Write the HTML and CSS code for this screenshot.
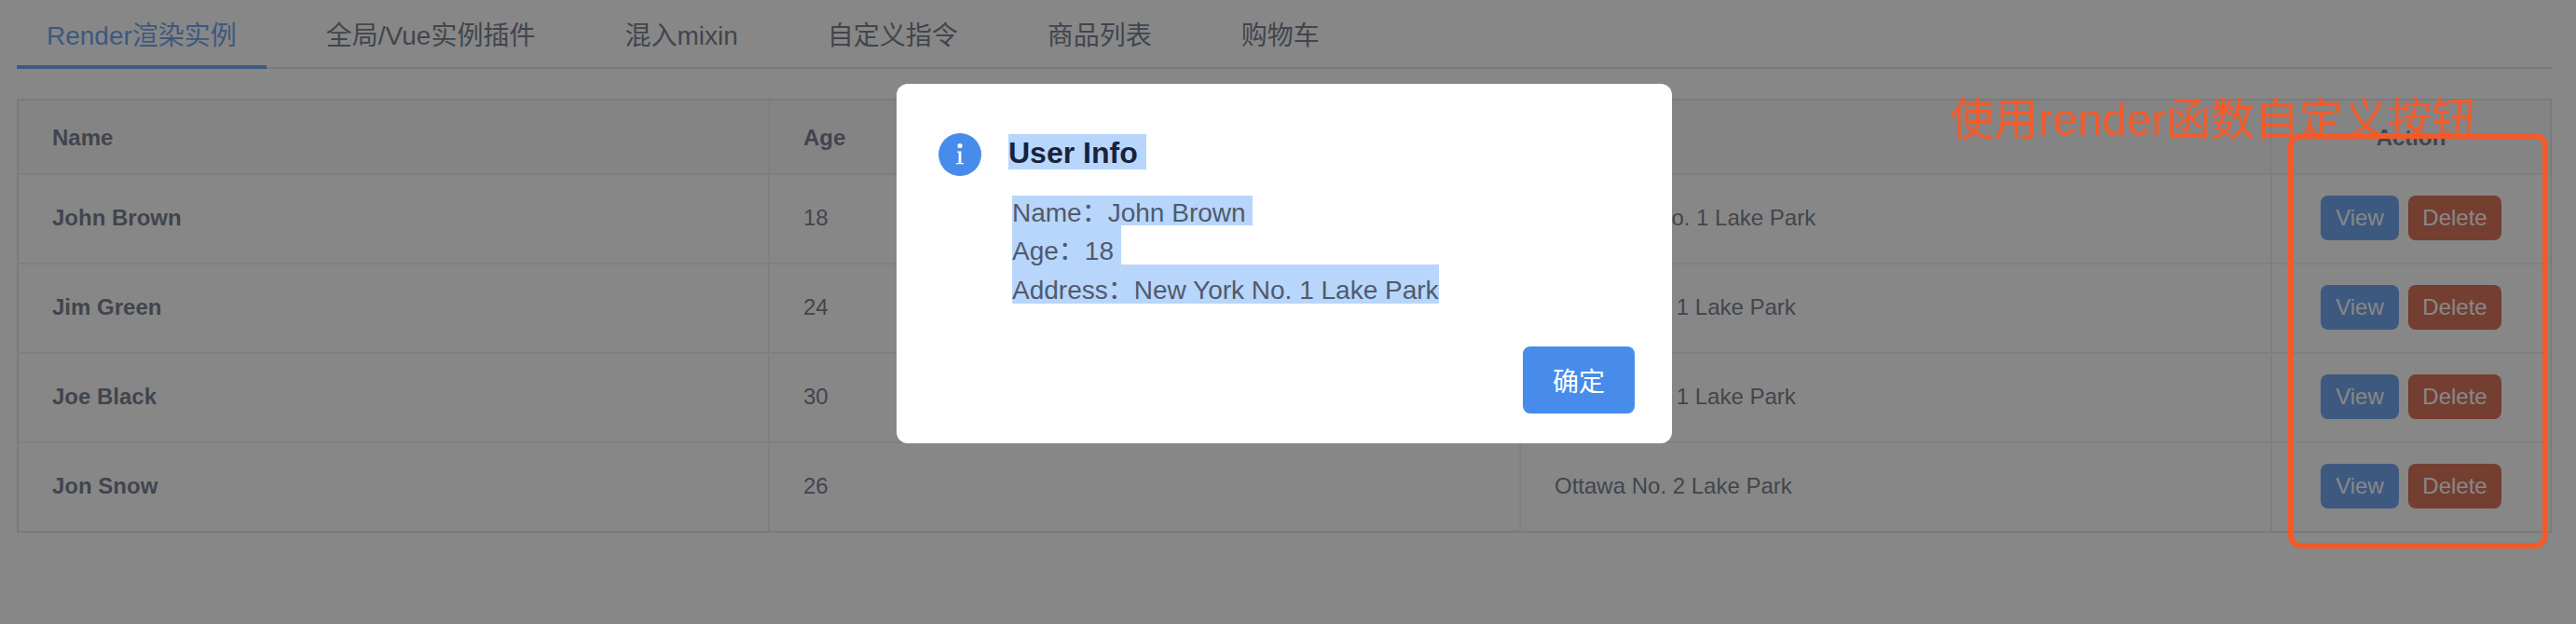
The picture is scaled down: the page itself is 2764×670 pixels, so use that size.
FILE: index.html
```html
<!DOCTYPE html>
<html lang="zh-CN">
<head>
<meta charset="utf-8">
<title>Render渲染实例</title>
<link rel="stylesheet" href="styles.css">
</head>
<body>
<main class="page">
  <nav class="tabs">
    <a class="tab tab-active">Render渲染实例</a>
    <a class="tab">全局/Vue实例插件</a>
    <a class="tab">混入mixin</a>
    <a class="tab">自定义指令</a>
    <a class="tab">商品列表</a>
    <a class="tab">购物车</a>
  </nav>
  <div class="table-wrap">
    <table class="table">
      <thead>
        <tr><th>Name</th><th>Age</th><th>Address</th><th class="action">Action</th></tr>
      </thead>
      <tbody>
        <tr><td class="name">John Brown</td><td>18</td><td>New York No. 1 Lake Park</td><td class="action"><button class="btn btn-view">View</button><button class="btn btn-delete">Delete</button></td></tr>
        <tr><td class="name">Jim Green</td><td>24</td><td>London No. 1 Lake Park</td><td class="action"><button class="btn btn-view">View</button><button class="btn btn-delete">Delete</button></td></tr>
        <tr><td class="name">Joe Black</td><td>30</td><td>Sydney No. 1 Lake Park</td><td class="action"><button class="btn btn-view">View</button><button class="btn btn-delete">Delete</button></td></tr>
        <tr><td class="name">Jon Snow</td><td>26</td><td>Ottawa No. 2 Lake Park</td><td class="action"><button class="btn btn-view">View</button><button class="btn btn-delete">Delete</button></td></tr>
      </tbody>
    </table>
  </div>
</main>

<div class="mask"></div>

<section class="modal">
  <header class="modal-head">
    <svg class="modal-icon" width="46" height="46" viewBox="0 0 46 46" aria-hidden="true">
      <circle cx="23" cy="23" r="23" fill="#478ceb"/>
      <circle cx="23" cy="13.5" r="2.6" fill="#fff"/>
      <path d="M20 19.5h4.4V32H27v1.2h-8V32h2.6V20.7H20z" fill="#fff"/>
    </svg>
    <h2 class="modal-title">User Info&nbsp;</h2>
  </header>
  <div class="modal-body">
    <div class="line line-first">Name<span class="colon">：</span>John Brown&nbsp;</div>
    <div class="line">Age<span class="colon">：</span>18&nbsp;</div>
    <div class="line">Address<span class="colon">：</span>New York No. 1 Lake Park</div>
  </div>
  <footer class="modal-foot">
    <button class="ok">确定</button>
  </footer>
</section>

<div class="note">使用render函数自定义按钮</div>
<div class="frame"></div>
</body>
</html>
```
FILE: styles.css
```css
* { box-sizing: border-box; }
html, body { margin: 0; height: 100%; overflow: hidden; }
body {
  background: #fff;
  color: #515a6e;
  font-family: "Liberation Sans", "Noto Sans CJK SC", sans-serif;
}
.page { padding: 0 26px 0 18px; }

.tabs {
  display: flex;
  height: 74px;
  padding-top: 6px;
  border-bottom: 2px solid #dcdee2;
}
.tab {
  height: 68px;
  margin-right: 32px;
  padding: 0 32px;
  font-size: 28px;
  line-height: 65px;
  white-space: nowrap;
}
.tab-active {
  color: #478ceb;
  border-bottom: 4px solid #478ceb;
}

.table-wrap {
  margin-top: 32px;
  border: 2px solid #dcdee2;
}
.table {
  width: 100%;
  table-layout: fixed;
  border-collapse: separate;
  border-spacing: 0;
  font-size: 24px;
  color: #515a6e;
}
.table th, .table td {
  padding: 0 36px 2px;
  text-align: left;
  border-right: 2px solid #e8eaec;
  border-bottom: 2px solid #e8eaec;
  height: 96px;
}
.table th {
  height: 80px;
  padding: 2px 36px 0;
  background: #f8f8f9;
  font-weight: 700;
}
.table .name { font-weight: 700; }
.table th:last-child, .table td:last-child { border-right: 0; width: 298px; }
.table tbody tr:last-child td { border-bottom: 0; height: 94px; }
.table .action { text-align: center; padding-left: 0; padding-right: 0; }

.btn {
  height: 48px;
  padding: 0;
  border: 0;
  border-radius: 8px;
  color: #fff;
  font: 24px "Liberation Sans", sans-serif;
  vertical-align: middle;
}
.btn-view { width: 84px; margin-right: 10px; background: #478ceb; }
.btn-delete { width: 100px; background: #d04a28; }

.mask {
  position: fixed;
  inset: 0;
  background: rgba(55, 55, 55, .6);
}

.modal {
  position: absolute;
  left: 962px;
  top: 90px;
  width: 832px;
  height: 386px;
  padding: 53px 40px 32px 45px;
  background: #fff;
  border-radius: 12px;
}
.modal-head { display: flex; align-items: flex-start; gap: 29px; }
.modal-icon { flex: none; display: block; }
.modal-title {
  margin: 1px 0 0;
  height: 38px;
  background: #b8d6fb;
  color: #17233d;
  font-size: 32px;
  font-weight: 700;
  line-height: 41px;
}
.modal-body { margin: 21px 0 0 79px; font-size: 28px; }
.line {
  width: fit-content;
  height: 42px;
  background: #b8d6fb;
  line-height: 50px;
  white-space: nowrap;
}
.line-first { height: 32px; line-height: 32px; }
.colon { font-family: "Noto Sans CJK TC", sans-serif; }
.modal-foot { display: flex; justify-content: flex-end; margin-top: 46px; }
.ok {
  width: 120px;
  height: 72px;
  border: 0;
  border-radius: 8px;
  background: #478ceb;
  color: #fff;
  font: 28px "Liberation Sans", "Noto Sans CJK SC", sans-serif;
}

.note {
  position: absolute;
  left: 2092px;
  top: 104px;
  color: #f25a2a;
  font-size: 47.5px;
  line-height: 50px;
  white-space: nowrap;
}
.frame {
  position: absolute;
  left: 2455px;
  top: 143px;
  width: 279px;
  height: 446px;
  border: 6px solid #f25a2a;
  border-radius: 14px;
}
```
